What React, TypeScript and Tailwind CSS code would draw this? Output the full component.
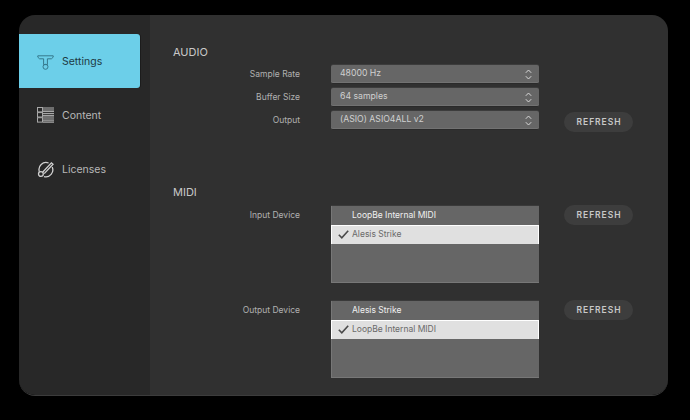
import React from "react";

const font = { fontFamily: '"Inter", "Liberation Sans", sans-serif' };

function TIcon() {
  return (
    <svg className="mt-[3px]" width="17" height="15" viewBox="0 0 17 15" fill="none" stroke="#35788c" strokeWidth="1">
      <path d="M0.8 0.8 H16.2 V2.2 L14.4 3.8 H10.4 V9.6 H6.6 V3.8 H2.6 L0.8 2.2 Z" />
      <circle cx="8.5" cy="11.8" r="2.5" />
    </svg>
  );
}

function ContentIcon() {
  return (
    <svg width="17" height="16" viewBox="0 0 17 16" fill="none">
      <g stroke="#a8a8a8" strokeWidth="1">
        <rect x="0.5" y="0.5" width="5" height="4.4" />
        <rect x="0.5" y="5.6" width="5" height="4.4" />
        <rect x="0.5" y="10.7" width="5" height="4.4" />
      </g>
      <g stroke="#b4b4b4" strokeWidth="1">
        <path d="M6 1 H17 M6 3 H17 M6 4.6 H17 M6 6.6 H17 M6 8.4 H17 M6 10 H17 M6 12 H17 M6 13.8 H17 M6 15.2 H17" />
      </g>
    </svg>
  );
}

function LicenseIcon() {
  return (
    <svg width="17" height="17" viewBox="0 0 17 17" fill="none" stroke="#d0d0d0" strokeWidth="1.3">
      <path d="M2.4 10.8 A7 7 0 0 1 11.6 2" />
      <path d="M15.2 6 A7 7 0 0 1 7 15.6" />
      <circle cx="3.9" cy="13" r="2.4" />
      <path d="M5.6 11.2 L14.4 1.8 L16 3.2 L7.2 12.6" />
    </svg>
  );
}

function Chevrons() {
  return (
    <svg width="7" height="11" viewBox="0 0 7 11" fill="none" stroke="#d8d8d8" strokeWidth="1">
      <path d="M0.8 3.8 L3.5 1 L6.2 3.8" />
      <path d="M0.8 7.2 L3.5 10 L6.2 7.2" />
    </svg>
  );
}

function Check() {
  return (
    <svg width="11" height="9" viewBox="0 0 11 9" fill="none" stroke="#4a4a4a" strokeWidth="1.6">
      <path d="M0.8 4.8 L3.8 7.8 L10.2 0.8" />
    </svg>
  );
}

function Refresh() {
  return (
    <button className="w-[69px] h-[20px] pl-px rounded-full bg-[#3d3d3d] text-[#c8c8c8] text-[8.5px] font-semibold tracking-[0.95px] flex items-center justify-center">
      REFRESH
    </button>
  );
}

function Label({ children }: { children: React.ReactNode }) {
  return <div className="w-[127px] text-right text-[8.5px] text-[#b0b0b0]">{children}</div>;
}

function SelectRow({ label, value, refresh }: { label: string; value: string; refresh?: boolean }) {
  return (
    <div className="flex items-center h-[19px]">
      <Label>{label}</Label>
      <div className="ml-[31px] w-[208px] h-[19px] rounded-[2px] bg-[#666666] border-b border-[#2a2a2a] shadow-[0_-1px_0_#3c3c3c,inset_0_-1px_0_#727272] flex items-center justify-between pl-[9px] pr-[7px] text-[8.7px] text-[#d0d0d0]">
        <span>{value}</span>
        <Chevrons />
      </div>
      {refresh && (
        <div className="ml-[25px] mt-[3px]">
          <Refresh />
        </div>
      )}
    </div>
  );
}

function ListRow({ label, first, second }: { label: string; first: string; second: string }) {
  return (
    <div className="flex items-start">
      <div className="pt-[3px]">
        <Label>{label}</Label>
      </div>
      <div className="ml-[31px] w-[208px] h-[77px] bg-[#666666] border-l border-b border-[#777777] shadow-[0_-1px_0_#3a3a3a] text-[8.5px]">
        <div className="h-[19px] pl-[20px] flex items-center text-[#f0f0f0]">{first}</div>
        <div className="h-[19px] -ml-px pb-px bg-[#e0e0e0] border-t border-x border-white flex items-center text-[#6a6a6a]">
          <span className="w-[20px] pl-[6px] flex items-center">
            <Check />
          </span>
          {second}
        </div>
      </div>
      <div className="ml-[25px] -mt-px">
        <Refresh />
      </div>
    </div>
  );
}

function NavItem({ icon, label, active }: { icon: React.ReactNode; label: string; active?: boolean }) {
  return (
    <div
      className={
        "w-[121px] h-[54px] flex items-center rounded-r-[3px] text-[10.5px] " +
        (active ? "bg-[#6ccfe9] text-[#1e3a44] shadow-[1px_0_0_#1c1c1c]" : "text-[#b8b8b8]")
      }
    >
      <div className="w-[43px] pl-[18px] flex items-center">{icon}</div>
      <span className="pt-[2px]">{label}</span>
    </div>
  );
}

export default function App() {
  return (
    <div className="w-[690px] h-[420px] bg-black pt-[15px] pl-[19px]" style={font}>
      <div className="w-[649px] h-[381px] rounded-[16px] overflow-hidden flex border-b border-[#3c3c3c]">
        <div className="w-[131px] bg-[#282828] pt-[19px]">
          <NavItem icon={<TIcon />} label="Settings" active />
          <NavItem icon={<ContentIcon />} label="Content" />
          <NavItem icon={<LicenseIcon />} label="Licenses" />
        </div>
        <div className="flex-1 bg-[#303030] pl-[23px] pt-[30px]">
          <div className="h-[14px] flex items-center text-[11px] text-[#c8c8c8]">AUDIO</div>
          <div className="mt-[6px] flex flex-col gap-[4px]">
            <SelectRow label="Sample Rate" value="48000 Hz" />
            <SelectRow label="Buffer Size" value="64 samples" />
            <SelectRow label="Output" value="(ASIO) ASIO4ALL v2" refresh />
          </div>
          <div className="mt-[55px] h-[14px] flex items-center text-[11px] text-[#c8c8c8]">MIDI</div>
          <div className="mt-[7px] flex flex-col gap-[18px]">
            <ListRow label="Input Device" first="LoopBe Internal MIDI" second="Alesis Strike" />
            <ListRow label="Output Device" first="Alesis Strike" second="LoopBe Internal MIDI" />
          </div>
        </div>
      </div>
    </div>
  );
}
